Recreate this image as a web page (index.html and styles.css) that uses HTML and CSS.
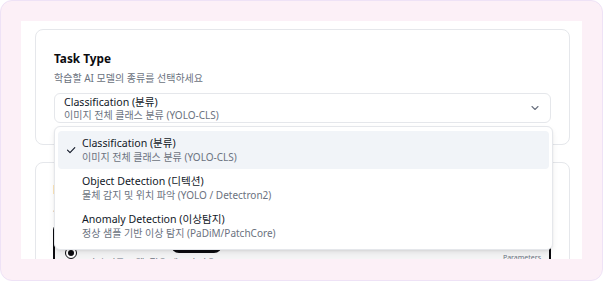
FILE: index.html
```html
<!DOCTYPE html>
<html lang="ko">
<head>
<meta charset="utf-8">
<link rel="stylesheet" href="styles.css">
</head>
<body>
<div class="frame">
  <div class="sheet">
    <section class="card">
      <h2 class="card-title">Task Type</h2>
      <p class="card-desc">학습할 AI 모델의 종류를 선택하세요</p>
      <div class="select-wrap">
        <div class="select">
          <div class="select-text">
            <div class="opt-title">Classification (분류)</div>
            <div class="opt-sub">이미지 전체 클래스 분류 (YOLO-CLS)</div>
          </div>
          <svg class="chevron" width="10" height="10" viewBox="0 0 10 10"><polyline points="2,3.5 5,6.5 8,3.5" fill="none" stroke="#6b7280" stroke-width="1.1" stroke-linecap="round" stroke-linejoin="round"/></svg>
        </div>
        <ul class="menu">
          <li class="item active">
            <svg class="check" width="10" height="10" viewBox="0 0 10 10"><polyline points="1.5,5.2 4,7.6 8.8,2.6" fill="none" stroke="#111827" stroke-width="1.1" stroke-linecap="round" stroke-linejoin="round"/></svg>
            <div class="item-text">
              <div class="opt-title">Classification (분류)</div>
              <div class="opt-sub">이미지 전체 클래스 분류 (YOLO-CLS)</div>
            </div>
          </li>
          <li class="item">
            <span class="check-space"></span>
            <div class="item-text">
              <div class="opt-title">Object Detection (디텍션)</div>
              <div class="opt-sub">물체 감지 및 위치 파악 (YOLO / Detectron2)</div>
            </div>
          </li>
          <li class="item">
            <span class="check-space"></span>
            <div class="item-text">
              <div class="opt-title">Anomaly Detection (이상탐지)</div>
              <div class="opt-sub">정상 샘플 기반 이상 탐지 (PaDiM/PatchCore)</div>
            </div>
          </li>
        </ul>
      </div>
    </section>
    <section class="card card-models">
      <h2 class="card-title">Model</h2>
      <p class="card-desc">사용할 모델을 선택하세요</p>
      <div class="model-option selected">
        <span class="radio"><span class="radio-dot"></span></span>
        <div class="model-body">
          <div class="model-head">
            <span class="model-name">YOLOv8n-cls</span>
            <span class="badge">추천</span>
          </div>
          <div class="model-desc">가장 빠른 모델, 적은 메모리 사용</div>
        </div>
        <span class="model-meta">Parameters</span>
      </div>
    </section>
  </div>
</div>
</body>
</html>
```

FILE: styles.css
```css
* { box-sizing: border-box; }
html, body { margin: 0; padding: 0; background: #ffffff; }
body {
  font-family: "Noto Sans", "Noto Sans CJK KR", sans-serif;
  color: #111827;
}
.frame {
  width: 603px;
  height: 281px;
  background: #fcf0f7;
  border: 1px solid #eee2f6;
  border-radius: 12px;
  padding: 20px 20px 0 20px;
}
.sheet {
  background: #ffffff;
  height: 238px;
  overflow: hidden;
  padding: 8px 12px 0 14px;
  display: flex;
  flex-direction: column;
  gap: 17px;
}
.card {
  border: 1px solid #e5e7eb;
  border-radius: 8px;
  padding: 20px 18px 21px 18px;
  background: #fff;
}
.card-title {
  margin: 0;
  font-size: 11.8px;
  line-height: 16px;
  font-weight: 700;
  color: #0b0b0f;
}
.card-desc {
  margin: 5px 0 0 0;
  font-size: 10px;
  line-height: 14px;
  color: #6b7280;
}
.select-wrap {
  position: relative;
  margin-top: 8px;
}
.select {
  display: flex;
  align-items: center;
  justify-content: space-between;
  border: 1px solid #e5e7eb;
  border-radius: 6px;
  padding: 1px 10px 1px 9px;
  height: 30px;
  background: #fff;
}
.select-text { display: flex; flex-direction: column; }
.opt-title {
  font-size: 10.6px;
  line-height: 14px;
  color: #111827;
}
.opt-sub {
  font-size: 10px;
  line-height: 13px;
  color: #6b7280;
}
.chevron { flex: none; }
.menu {
  position: absolute;
  left: 0;
  right: -2px;
  top: 33px;
  margin: 0;
  list-style: none;
  padding: 4px 3px;
  background: #fff;
  border: 1px solid #e5e7eb;
  border-radius: 6px;
  box-shadow: 0 3px 6px -1px rgba(0,0,0,0.10), 0 1px 2px rgba(0,0,0,0.05);
  z-index: 10;
}
.item {
  display: flex;
  align-items: center;
  height: 38px;
  padding: 0 8px;
  border-radius: 4px;
}
.item.active { background: #f1f4f8; }
.check, .check-space { width: 10px; height: 10px; flex: none; margin-right: 6px; }
.item-text { display: flex; flex-direction: column; }
.item .opt-sub { margin-top: 1px; }

.card-models {
  padding: 18px 18px 0 17px;
}
.model-option {
  display: flex;
  align-items: flex-start;
  margin-top: 8px;
  border: 2px solid #0b0b0f;
  border-radius: 6px;
  background: #f4f4f5;
  padding: 10px 8px 8px 10px;
}
.radio {
  flex: none;
  width: 12px;
  height: 12px;
  border: 1.5px solid #0b0b0f;
  border-radius: 50%;
  display: flex;
  align-items: center;
  justify-content: center;
  margin-top: 11px;
  background: #fff;
}
.radio-dot { width: 6px; height: 6px; border-radius: 50%; background: #0b0b0f; }
.model-body { flex: 1; margin-left: 10px; }
.model-head { display: flex; align-items: center; gap: 8px; height: 18px; }
.model-name { font-size: 10px; font-weight: 600; }
.badge {
  background: #0b0b0f;
  color: #fff;
  font-size: 8px;
  line-height: 16px;
  border-radius: 8px;
  padding: 0 18px;
  margin-left: 16px;
}
.model-desc { font-size: 9.5px; line-height: 13px; color: #6b7280; margin-top: 2px; }
.model-meta { font-size: 7px; line-height: 10px; color: #6b7280; margin-top: 17px; }
```
